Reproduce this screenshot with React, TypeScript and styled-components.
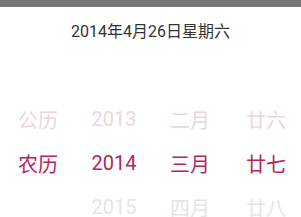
import styled, { createGlobalStyle } from "styled-components";

const GlobalStyle = createGlobalStyle`
  html, body {
    margin: 0;
    padding: 0;
    background: #fff;
  }
  body {
    font-family: Roboto, "Noto Sans CJK SC", sans-serif;
  }
`;

const Screen = styled.div`
  height: 100vh;
  overflow: hidden;
`;

const StatusBar = styled.div`
  height: 7px;
  background-color: #777;
`;

const Title = styled.div`
  height: 90px;
  box-sizing: border-box;
  padding-top: 15px;
  text-align: center;
  font-size: 16px;
  line-height: 20px;
  color: #333;
`;

const Picker = styled.div`
  display: grid;
  grid-template-columns: repeat(4, 76px);
`;

const Column = styled.div`
  display: flex;
  flex-direction: column;
`;

type CellProps = { $tone: "active" | "above" | "below" };

const tones = {
  active: "#b3255f",
  above: "#ecd6dd",
  below: "#ebe2e5",
};

const Cell = styled.div<CellProps>`
  height: 44px;
  display: flex;
  align-items: center;
  justify-content: center;
  font-size: 20px;
  color: ${(p) => tones[p.$tone]};
`;

const columns = [
  ["公历", "农历", ""],
  ["2013", "2014", "2015"],
  ["二月", "三月", "四月"],
  ["廿六", "廿七", "廿八"],
];

const rowTone: CellProps["$tone"][] = ["above", "active", "below"];

export default function App() {
  return (
    <Screen>
      <GlobalStyle />
      <StatusBar />
      <Title>2014年4月26日星期六</Title>
      <Picker>
        {columns.map((col, i) => (
          <Column key={i}>
            {col.map((v, j) => (
              <Cell key={j} $tone={rowTone[j]}>
                {v}
              </Cell>
            ))}
          </Column>
        ))}
      </Picker>
    </Screen>
  );
}
